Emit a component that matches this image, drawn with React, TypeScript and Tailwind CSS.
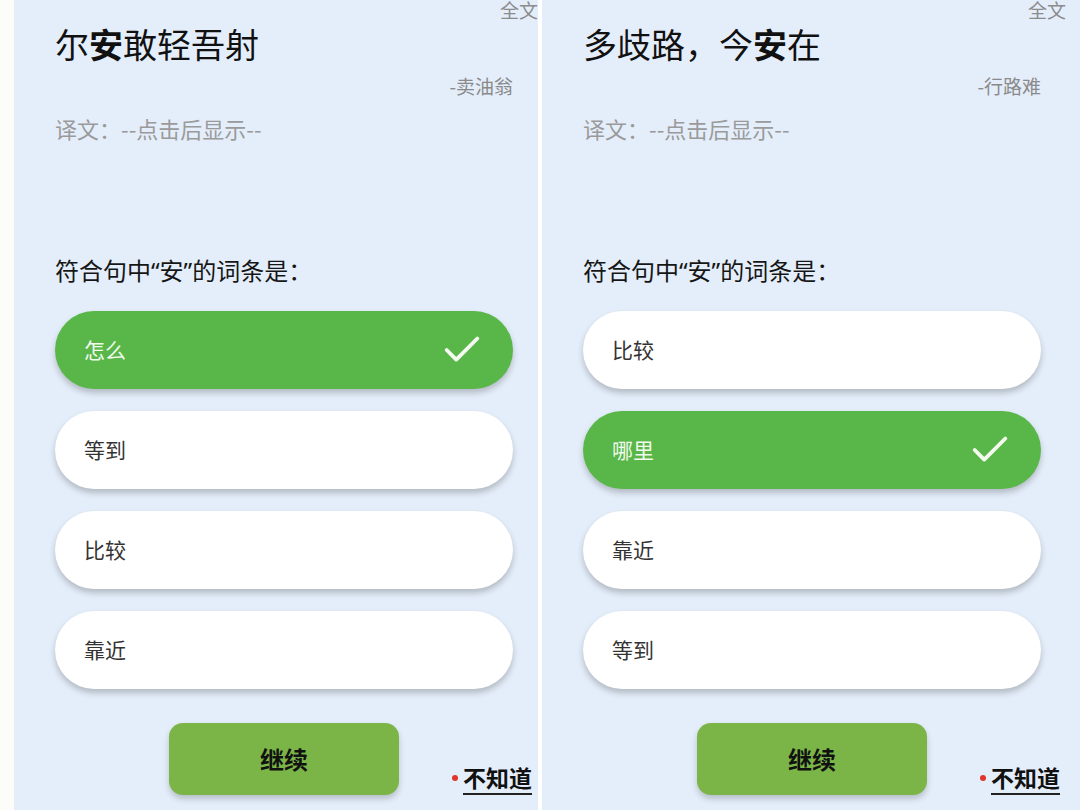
import { Check } from 'lucide-react'

type Quiz = {
  title: { text: string; bold?: boolean }[]
  author: string
  options: string[]
  correct: number
}

const quizzes: Quiz[] = [
  {
    title: [{ text: '尔' }, { text: '安', bold: true }, { text: '敢轻吾射' }],
    author: '-卖油翁',
    options: ['怎么', '等到', '比较', '靠近'],
    correct: 0,
  },
  {
    title: [{ text: '多歧路，今' }, { text: '安', bold: true }, { text: '在' }],
    author: '-行路难',
    options: ['比较', '哪里', '靠近', '等到'],
    correct: 1,
  },
]

const font = { fontFamily: '"Noto Sans CJK SC", "Noto Sans", sans-serif' }
// latin first so the curly quotes come out narrow, like the screenshot
const quoteFont = { fontFamily: '"Noto Sans", "Noto Sans CJK SC", sans-serif' }

const Panel = ({ quiz, width }: { quiz: Quiz; width: string }) => {
  return (
    <section className={`${width} shrink-0 h-full bg-[#e4eefa] overflow-hidden`}>
      <div className="w-[524px] h-full pl-[41px] pr-[25px] flex flex-col">
        {/* top link */}
        <div className="-mr-[25px] h-[19px] text-right text-[19px] leading-[19px] text-[#8c8c8c]">
          全文
        </div>

        {/* sentence */}
        <h1 className="mt-[5px] text-[34px] leading-[40px] text-[#111] font-normal">
          {quiz.title.map((t, i) => (
            <span key={i} className={t.bold ? 'font-bold' : ''}>
              {t.text}
            </span>
          ))}
        </h1>
        <div className="mt-[10px] text-right text-[19px] leading-[24px] text-[#8a8a8a]">
          {quiz.author}
        </div>
        <div className="mt-[16px] text-[22px] leading-[28px] text-[#9a9a9a]">
          译文：--点击后显示--
        </div>

        {/* question */}
        <div className="mt-[114px] text-[24px] leading-[30px] text-[#161616]" style={quoteFont}>
          符合句中“安”的词条是：
        </div>

        <ul className="mt-[25px] flex flex-col gap-[22px]">
          {quiz.options.map((opt, i) => {
            const ok = i === quiz.correct
            return (
              <li
                key={i}
                className={
                  'h-[78px] rounded-full pl-[29px] pr-[28px] flex items-center justify-between text-[21px] shadow-[0_4px_6px_rgba(0,0,0,0.22)] ' +
                  (ok ? 'bg-[#58b748] text-[#f2f9ee]' : 'bg-white text-[#333]')
                }
              >
                <span>{opt}</span>
                {ok && <Check size={46} strokeWidth={2} className="text-[#f4faf0]" />}
              </li>
            )
          })}
        </ul>

        {/* bottom actions */}
        <div className="mt-[34px] flex items-end">
          <button className="ml-[114px] w-[230px] h-[72px] rounded-[14px] bg-[#7bb547] text-[24px] font-bold text-[#111] shadow-[0_4px_6px_rgba(0,0,0,0.2)]">
            继续
          </button>
          <div className="ml-auto -mr-[19px] flex items-center">
            <span className="w-[6px] h-[6px] rounded-full bg-[#e0342c] mr-[5px] mt-[-4px]" />
            <span className="text-[23px] leading-[26px] font-bold text-[#111] border-b-2 border-[#222] pb-[3px]">
              不知道
            </span>
          </div>
        </div>
      </div>
    </section>
  )
}

export default function App() {
  return (
    <div className="w-[1080px] h-[810px] flex overflow-hidden bg-white" style={font}>
      <div className="w-[14px] shrink-0 bg-[#fcfcf8]" />
      <Panel quiz={quizzes[0]} width="w-[524px]" />
      <div className="w-[4px] shrink-0 bg-white" />
      <Panel quiz={quizzes[1]} width="w-[538px]" />
    </div>
  )
}
